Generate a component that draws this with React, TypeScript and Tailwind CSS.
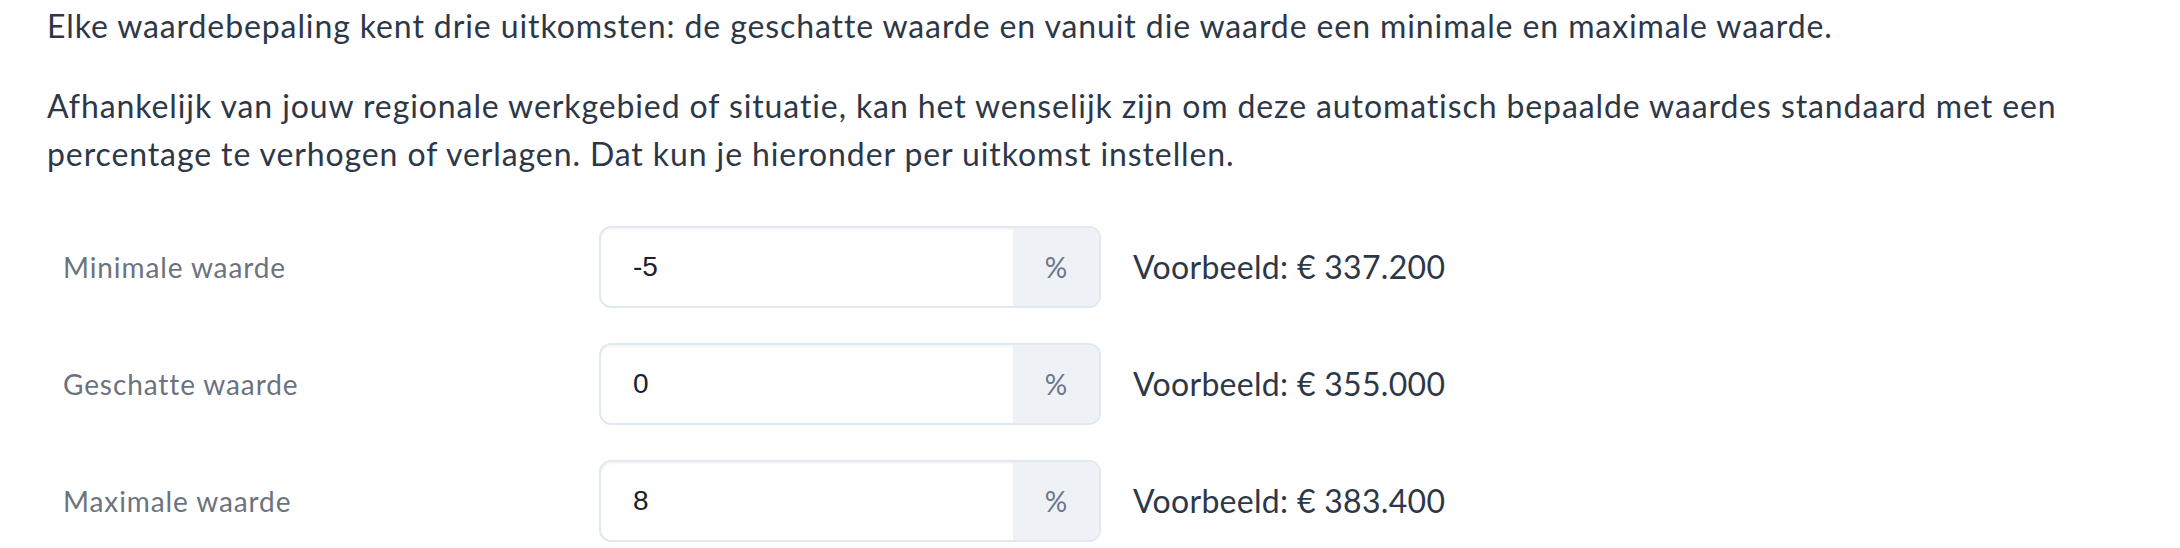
const rows = [
  { label: "Minimale waarde", value: "-5", example: "€ 337.200" },
  { label: "Geschatte waarde", value: "0", example: "€ 355.000" },
  { label: "Maximale waarde", value: "8", example: "€ 383.400" },
];

export default function App() {
  return (
    <div className="min-h-screen bg-white px-[47px] pt-[2px] font-['Lato',sans-serif] text-[#2d3748]">
      <p className="text-[32px] leading-[48px] tracking-[0.9px]">
        Elke waardebepaling kent drie uitkomsten: de geschatte waarde en vanuit die waarde een minimale en maximale waarde.
      </p>
      <p className="mt-[32px] text-[32px] leading-[48px] tracking-[0.9px]">
        Afhankelijk van jouw regionale werkgebied of situatie, kan het wenselijk zijn om deze automatisch bepaalde waardes standaard met een percentage te verhogen of verlagen. Dat kun je hieronder per uitkomst instellen.
      </p>

      <div className="mt-[48px] flex flex-col gap-[35px]">
        {rows.map((row) => (
          <div key={row.label} className="flex items-center">
            <label className="w-[552px] pl-[16px] text-[28px] tracking-[0.9px] text-[#6b7280]">{row.label}</label>
            <div className="flex h-[82px] w-[502px] overflow-hidden rounded-[12px] border-2 border-[#e2e8f0] shadow-[inset_0_2px_2px_rgba(0,0,0,0.04)]">
              <input
                readOnly
                value={row.value}
                className="min-w-0 flex-1 bg-transparent pl-[32px] font-['Liberation_Sans',sans-serif] text-[28px] text-[#1a202c] outline-none"
              />
              <span className="flex w-[86px] items-center justify-center bg-[#eef1f6] text-[28px] text-[#6b7689]">%</span>
            </div>
            <span className="ml-[32px] text-[32px] tracking-[0.3px]">Voorbeeld: {row.example}</span>
          </div>
        ))}
      </div>
    </div>
  );
}
